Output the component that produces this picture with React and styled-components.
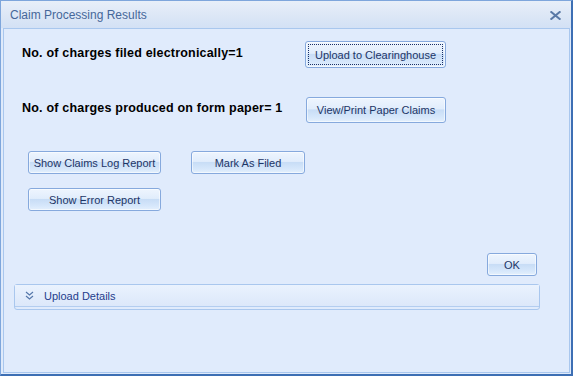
import React from 'react';
import styled, { createGlobalStyle } from 'styled-components';

const GlobalStyle = createGlobalStyle`
  html, body {
    margin: 0;
    padding: 0;
    background: #dfeafb;
  }
  body {
    font-family: "Liberation Sans", Arial, sans-serif;
  }
`;

const Window = styled.div`
  width: 573px;
  height: 376px;
  box-sizing: border-box;
  display: flex;
  flex-direction: column;
  border-left: 1px solid #7ea6dc;
  border-top: 1px solid #7ea6dc;
  border-right: 2px solid #3d6fb4;
  border-bottom: 2px solid #3d6fb4;
  background: #dfeafb;
`;

const TitleBar = styled.div`
  height: 27px;
  flex-shrink: 0;
  display: flex;
  align-items: center;
  justify-content: space-between;
  padding: 0 10px 0 9px;
  background: linear-gradient(to bottom, #e8eff9 0%, #dbe6f6 60%, #d3e1f5 100%);
`;

const Title = styled.span`
  font-size: 12px;
  color: #46679a;
`;

const CloseIcon = styled.svg`
  width: 11px;
  height: 9px;
  margin-top: 1px;
`;

const Body = styled.div`
  flex: 1;
  margin: 0 1px 1px 2px;
  border: 1px solid #a9c7ee;
  background: #e0ebfc;
  padding: 12px 0 0 0;
  display: flex;
  flex-direction: column;
`;

const CountRow = styled.div`
  display: flex;
  align-items: center;
  padding-left: 18px;
  margin-bottom: ${p => p.$gap || 0}px;
`;

const CountLabel = styled.div`
  width: 283px;
  font-size: 12.5px;
  letter-spacing: 0.2px;
  font-weight: bold;
  color: #000;
  margin-top: ${p => p.$offset || 0}px;
`;

const Button = styled.button`
  box-sizing: border-box;
  width: ${p => p.$w}px;
  height: ${p => p.$h || 22}px;
  padding: 0;
  border: 1px solid #86a9dd;
  border-radius: 3px;
  font-family: "Liberation Sans", Arial, sans-serif;
  font-size: 11px;
  color: #1d3566;
  background: linear-gradient(
    to bottom,
    #eef5fe 0%,
    #e1edfc 45%,
    #c8ddf6 50%,
    #d6e7fb 80%,
    #e4f0fd 100%
  );
  box-shadow: inset 0 0 0 1px rgba(255, 255, 255, 0.55);
  position: relative;
  cursor: pointer;
  flex-shrink: 0;
`;

const FocusRing = styled.span`
  position: absolute;
  inset: 2px;
  border: 1px dotted #1a2f66;
  pointer-events: none;
`;

const ReportGrid = styled.div`
  display: grid;
  grid-template-columns: 133px 114px;
  column-gap: 30px;
  row-gap: 14px;
  padding-left: 24px;
  margin-top: 28px;
`;

const Footer = styled.div`
  display: flex;
  justify-content: flex-end;
  padding-right: 32px;
  margin-top: 42px;
`;

const Panel = styled.div`
  margin: 8px 29px 0 10px;
  border: 1px solid #a9c7ee;
  border-radius: 3px;
  height: 26px;
  box-sizing: border-box;
  display: flex;
  flex-direction: column;
`;

const PanelHeader = styled.div`
  height: 21px;
  display: flex;
  align-items: center;
  padding-left: 10px;
  gap: 10px;
  border-bottom: 1px solid #b3cdf0;
  background: linear-gradient(to bottom, #eaf2fe 0%, #dce8fa 100%);
`;

const PanelTitle = styled.span`
  font-size: 11px;
  color: #1f3c8c;
`;

export default function App() {
  return (
    <>
      <GlobalStyle />
      <Window>
        <TitleBar>
          <Title>Claim Processing Results</Title>
          <CloseIcon viewBox="0 0 11 9">
            <path d="M1.3 1 L9.7 8 M9.7 1 L1.3 8" stroke="#5a79a6" strokeWidth="2" strokeLinecap="square" />
          </CloseIcon>
        </TitleBar>
        <Body>
          <CountRow $gap={29}>
            <CountLabel $offset={-4}>No. of charges filed electronically=1</CountLabel>
            <Button $w={141} $h={27}>
              Upload to Clearinghouse
              <FocusRing />
            </Button>
          </CountRow>
          <CountRow>
            <CountLabel $offset={-4}>No. of charges produced on form paper= 1</CountLabel>
            <Button $w={140} $h={26} style={{ marginLeft: 1 }}>View/Print Paper Claims</Button>
          </CountRow>
          <ReportGrid>
            <Button $w={133} $h={23}>Show Claims Log Report</Button>
            <Button $w={114} $h={23}>Mark As Filed</Button>
            <Button $w={133} $h={23}>Show Error Report</Button>
          </ReportGrid>
          <Footer>
            <Button $w={50} $h={23}>OK</Button>
          </Footer>
          <Panel>
            <PanelHeader>
              <svg width="9" height="9" viewBox="0 0 9 9">
                <path d="M1 1 L4.5 4 L8 1 M1 5 L4.5 8 L8 5" stroke="#5577aa" strokeWidth="1.2" fill="none" />
              </svg>
              <PanelTitle>Upload Details</PanelTitle>
            </PanelHeader>
          </Panel>
        </Body>
      </Window>
    </>
  );
}
